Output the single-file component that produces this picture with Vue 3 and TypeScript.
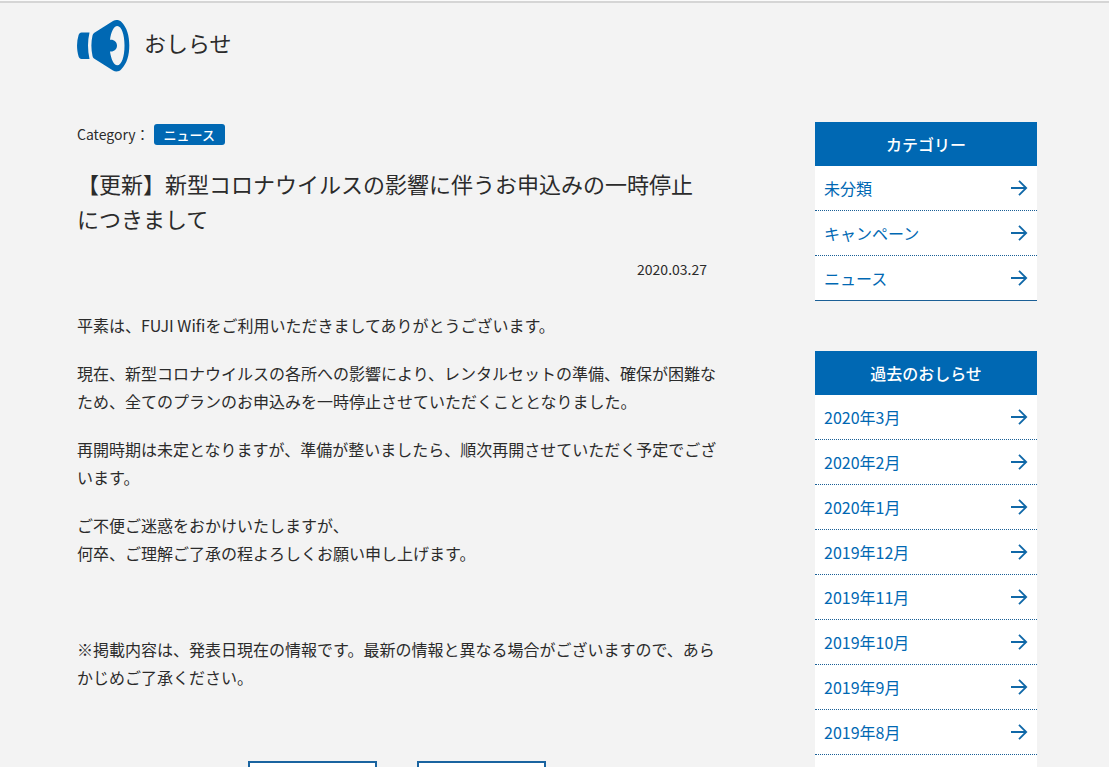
<script setup lang="ts">
interface LinkGroup {
  id: string
  title: string
  items: string[]
}

const groups: LinkGroup[] = [
  { id: 'topics', title: 'カテゴリー', items: ['未分類', 'キャンペーン', 'ニュース'] },
  {
    id: 'archive',
    title: '過去のおしらせ',
    items: ['2020年3月', '2020年2月', '2020年1月', '2019年12月', '2019年11月', '2019年10月', '2019年9月', '2019年8月'],
  },
]
</script>

<template>
  <div class="page">
    <header class="head">
      <svg class="horn" viewBox="0 0 54 54" aria-hidden="true">
        <path d="M4.500 13.500H12.500C10.500 22 10.500 31 12.500 40H4.500C3 40 2.200 39 1.600 37.500C-.5 30-.5 23 1.600 16C2.200 14.500 3 13.500 4.500 13.500z" />
        <path fill-rule="evenodd" d="M17 14L36 2C38.500 .5 42 .5 44.500 3C50 8.500 52.300 17 52.300 26.500C52.300 36 50 44.500 44.500 50C42 53 38.500 53 36 51.500L17 39.500Q15.800 38.500 15.500 37C14 30 14 23 15.500 16.500Q15.800 15 17 14zM40.300 7C36.800 7 34 13 33 20.700C37 20.200 40 23 40 26.500C40 30.300 37 33 33 32.500C34 40 36.800 46.300 40.300 46.300C44.500 46.300 47.500 38 47.500 26.500C47.500 15.500 44.500 7 40.300 7z" />
      </svg>
      <h1>おしらせ</h1>
    </header>
    <div class="columns">
      <main class="article">
        <div class="category">Category： <a href="#news" class="tag">ニュース</a></div>
        <h2>【更新】新型コロナウイルスの影響に伴うお申込みの一時停止につきまして</h2>
        <time datetime="2020-03-27">2020.03.27</time>
        <div class="body">
          <p>平素は、FUJI Wifiをご利用いただきましてありがとうございます。</p>
          <p>現在、新型コロナウイルスの各所への影響により、レンタルセットの準備、確保が困難なため、全てのプランのお申込みを一時停止させていただくこととなりました。</p>
          <p>再開時期は未定となりますが、準備が整いましたら、順次再開させていただく予定でございます。</p>
          <p>ご不便ご迷惑をおかけいたしますが、<br />何卒、ご理解ご了承の程よろしくお願い申し上げます。</p>
          <p class="note">※掲載内容は、発表日現在の情報です。最新の情報と異なる場合がございますので、あらかじめご了承ください。</p>
        </div>
        <nav class="pager" aria-label="記事の移動">
          <a href="#prev"></a>
          <a href="#next"></a>
        </nav>
      </main>
      <aside class="side">
        <section v-for="group in groups" :key="group.id" :class="group.id">
          <h3>{{ group.title }}</h3>
          <ul>
            <li v-for="item in group.items" :key="item">
              <a href="#list">
                <span>{{ item }}</span>
                <svg class="arrow" viewBox="0 0 18 16" aria-hidden="true"><path d="M1 8h15.500M9 .8l7.200 7.200L9 15.200" /></svg>
              </a>
            </li>
          </ul>
        </section>
      </aside>
    </div>
  </div>
</template>

<style>
body {
  margin: 0;
  background: #f3f3f3;
}
</style>

<style scoped>
.page {
  box-sizing: border-box;
  height: 100vh;
  overflow: hidden;
  padding: 17px 72px 0 77px;
  border-top: 1px solid #fafafa;
  box-shadow: inset 0 2px 0 #d5d5d5;
  background: #f3f3f3;
  color: #2b2b2b;
  font-family: "Noto Sans CJK JP", sans-serif;
  font-size: 16px;
  line-height: 28px;
}
.head {
  display: flex;
  align-items: flex-start;
  gap: 13px;
  height: 56px;
}
.horn {
  width: 54px;
  height: 54px;
  margin-top: 1px;
  fill: #0068b3;
}
h1, h2, h3, p, ul {
  margin: 0;
  padding: 0;
  font-weight: 400;
}
h1 {
  font-size: 22px;
  line-height: 48px;
}
.columns {
  display: flex;
  justify-content: space-between;
  align-items: flex-start;
  margin-top: 48px;
}
.article {
  flex: 0 1 640px;
}
.category {
  display: flex;
  align-items: center;
  gap: 4px;
  height: 24px;
  font-size: 14px;
}
.tag {
  padding: 0 10px;
  border-radius: 3px;
  background: #0068b3;
  color: #fff;
  font-size: 13px;
  font-weight: 500;
  line-height: 21px;
  text-decoration: none;
}
h2 {
  margin-top: 20px;
  padding-right: 20px;
  font-size: 22px;
  line-height: 35px;
}
time {
  display: block;
  margin: 19px 10px 0 0;
  font-size: 14px;
  text-align: right;
}
.body {
  margin-top: 28px;
}
.body p {
  margin-bottom: 20px;
}
.body .note {
  margin-top: 68px;
}
.pager {
  display: flex;
  justify-content: center;
  gap: 40px;
  margin-top: 70px;
}
.pager a {
  box-sizing: border-box;
  width: 129px;
  height: 44px;
  border: 2px solid #1a64a0;
  background: #fff;
}
.side {
  flex: 0 0 222px;
}
section {
  margin-bottom: 50px;
}
h3 {
  background: #0068b3;
  color: #fff;
  font-size: 16px;
  font-weight: 500;
  line-height: 44px;
  text-align: center;
}
ul {
  list-style: none;
  background: #fff;
}
li {
  border-bottom: 1px dotted #1a5f96;
}
.topics li:last-child {
  border-bottom-style: solid;
}
.archive ul {
  padding-bottom: 45px;
}
li a {
  display: flex;
  align-items: center;
  justify-content: space-between;
  padding: 0 9px;
  color: #0068b3;
  line-height: 44px;
  text-decoration: none;
}
.arrow {
  width: 18px;
  height: 16px;
  fill: none;
  stroke: #1068a8;
  stroke-width: 1.800;
}
</style>
